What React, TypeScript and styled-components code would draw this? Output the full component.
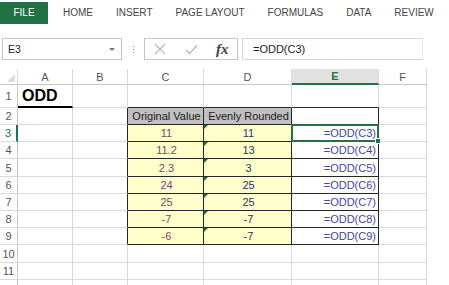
import { Fragment } from 'react';

import styled, { createGlobalStyle } from 'styled-components';

const GRID = '#d9d9d9';
const DARK = '#262626';
const GREEN = '#217346';

const GlobalStyle = createGlobalStyle`
  html, body {
    margin: 0;
    padding: 0;
    background: #fff;
  }
  body {
    font-family: 'Liberation Sans', Arial, sans-serif;
    width: 449px;
    height: 285px;
    overflow: hidden;
  }
`;

const tabs = ['HOME', 'INSERT', 'PAGE LAYOUT', 'FORMULAS', 'DATA', 'REVIEW'];
const columns = [
  { key: 'A', width: 55 },
  { key: 'B', width: 55 },
  { key: 'C', width: 76 },
  { key: 'D', width: 88 },
  { key: 'E', width: 87 },
  { key: 'F', width: 48 },
];
// last row only peeks in at the bottom edge, its number is below the fold
const rowHeights = [23, 17, 17, 17, 18, 17, 17, 17, 17, 18, 17, 17];
const visibleRows = 11;

const values = [
  { orig: '11', rounded: '11' },
  { orig: '11.2', rounded: '13' },
  { orig: '2.3', rounded: '3' },
  { orig: '24', rounded: '25' },
  { orig: '25', rounded: '25' },
  { orig: '-7', rounded: '-7' },
  { orig: '-6', rounded: '-7' },
];

type CellSpec = {
  text?: string;
  bg?: string;
  color?: string;
  align?: 'left' | 'center' | 'right';
  right?: string;
  bottom?: string;
  bottomWidth?: number;
  title?: boolean;
  flag?: boolean;
  selected?: boolean;
};

// works out what sits in each cell of the sheet
const cellAt = (row: number, col: string): CellSpec => {
  const inTable = row >= 2 && row <= 9;
  if (row === 1 && col === 'A') return { text: 'ODD', title: true, bottom: '#000', bottomWidth: 2 };
  if (row === 1 && ['C', 'D', 'E'].includes(col)) return { bottom: DARK };
  if (!inTable) return {};
  if (col === 'B') return { right: DARK };
  if (row === 2) {
    if (col === 'C') return { text: 'Original Value', bg: '#c0c0c0', color: '#1a1a1a', right: DARK, bottom: DARK };
    if (col === 'D') return { text: 'Evenly Rounded', bg: '#c0c0c0', color: '#1a1a1a', right: DARK, bottom: DARK };
    if (col === 'E') return { right: DARK, bottom: DARK };
    return {};
  }
  const v = values[row - 3];
  if (col === 'C') return { text: v.orig, bg: '#ffffcc', color: '#7a4468', right: DARK, bottom: DARK };
  if (col === 'D') return { text: v.rounded, bg: '#ffffcc', color: '#253865', right: DARK, bottom: DARK, flag: true };
  if (col === 'E')
    return {
      text: `=ODD(C${row})`,
      color: '#4444a6',
      align: 'right',
      right: DARK,
      bottom: DARK,
      selected: row === 3,
    };
  return {};
};

const App = () => {
  return (
    <Page>
      <GlobalStyle />
      <Ribbon>
        <FileTab>FILE</FileTab>
        <Tabs>
          {tabs.map((t) => (
            <Tab key={t}>{t}</Tab>
          ))}
        </Tabs>
      </Ribbon>

      <FormulaBar>
        <NameBox>
          <span>E3</span>
          <Caret />
        </NameBox>
        <Dots>
          <i />
          <i />
          <i />
        </Dots>
        <FxBox>
          <svg width="12" height="12" viewBox="0 0 12 12">
            <path d="M1 1 L11 11 M11 1 L1 11" stroke="#bdbdbd" strokeWidth="1.4" fill="none" />
          </svg>
          <svg width="13" height="11" viewBox="0 0 13 11">
            <path d="M1 6 L4.5 9.5 L12 1.5" stroke="#bdbdbd" strokeWidth="1.5" fill="none" />
          </svg>
          <Fx>fx</Fx>
        </FxBox>
        <FormulaInput>=ODD(C3)</FormulaInput>
      </FormulaBar>

      <Sheet $rows={rowHeights}>
        <Corner />
        {columns.map((c) => (
          <ColHead key={c.key} $selected={c.key === 'E'}>
            {c.key}
          </ColHead>
        ))}
        {rowHeights.map((_, i) => {
          const row = i + 1;
          return (
            <Fragment key={row}>
              <RowHead $selected={row === 3}>{row <= visibleRows ? row : ''}</RowHead>
              {columns.map((c) => {
                const s = cellAt(row, c.key);
                return (
                  <Cell
                    key={c.key}
                    $bg={s.bg}
                    $color={s.color}
                    $align={s.align ?? (s.title ? 'left' : 'center')}
                    $right={s.right}
                    $bottom={s.bottom}
                    $bottomWidth={s.bottomWidth}
                    $title={s.title}
                    $flag={s.flag}
                  >
                    {s.text}
                    {s.selected && (
                      <Selection>
                        <Handle />
                      </Selection>
                    )}
                  </Cell>
                );
              })}
            </Fragment>
          );
        })}
      </Sheet>
    </Page>
  );
};

export default App;

const Page = styled.div`
  width: 449px;
  height: 285px;
  overflow: hidden;
  background: #fff;
`;

const Ribbon = styled.div`
  display: flex;
  align-items: center;
  height: 24px;
  padding-top: 1px;
  box-sizing: border-box;
`;

const FileTab = styled.div`
  width: 48px;
  height: 22px;
  background: ${GREEN};
  color: #fff;
  font-size: 10px;
  display: flex;
  align-items: center;
  justify-content: center;
`;

const Tabs = styled.div`
  display: flex;
  gap: 23px;
  margin-left: 15px;
  white-space: nowrap;
`;

const Tab = styled.div`
  font-size: 10px;
  color: #444;
`;

const FormulaBar = styled.div`
  display: flex;
  align-items: center;
  height: 22px;
  margin-top: 14px;
  padding-left: 2px;
`;

const NameBox = styled.div`
  width: 120px;
  height: 22px;
  box-sizing: border-box;
  border: 1px solid #c6c6c6;
  display: flex;
  align-items: center;
  justify-content: space-between;
  padding: 0 6px 0 5px;
  font-size: 10.5px;
  color: #222;
`;

const Caret = styled.span`
  width: 0;
  height: 0;
  border-left: 3px solid transparent;
  border-right: 3px solid transparent;
  border-top: 3px solid #777;
`;

const Dots = styled.div`
  display: flex;
  flex-direction: column;
  gap: 2px;
  margin: 0 10px 0 11px;
  i {
    display: block;
    width: 1px;
    height: 1px;
    background: #999;
  }
`;

const FxBox = styled.div`
  width: 94px;
  height: 22px;
  box-sizing: border-box;
  border: 1px solid #c6c6c6;
  display: flex;
  align-items: center;
  gap: 19px;
  padding-left: 9px;
`;

const Fx = styled.span`
  font-family: 'Liberation Serif', 'Times New Roman', serif;
  font-style: italic;
  font-weight: bold;
  font-size: 15px;
  color: #444;
  margin-left: -1px;
`;

const FormulaInput = styled.div`
  width: 181px;
  height: 22px;
  box-sizing: border-box;
  margin-left: 4px;
  border: 1px solid #d6d6d6;
  border-right-color: #ececec;
  display: flex;
  align-items: center;
  padding-left: 10px;
  font-size: 11px;
  color: #222;
`;

const Sheet = styled.div<{ $rows: number[] }>`
  display: grid;
  grid-template-columns: 18px ${columns.map((c) => `${c.width}px`).join(' ')};
  grid-template-rows: 16px ${(p) => p.$rows.map((h) => `${h}px`).join(' ')};
  margin-top: 9px;
  font-size: 11px;
`;

const Corner = styled.div`
  position: relative;
  border-right: 1px solid ${GRID};
  border-bottom: 1px solid #c6c6c6;
  &::after {
    content: '';
    position: absolute;
    right: 2px;
    bottom: 2px;
    border-left: 8px solid transparent;
    border-bottom: 8px solid #dcdcdc;
  }
`;

const ColHead = styled.div<{ $selected?: boolean }>`
  display: flex;
  align-items: center;
  justify-content: center;
  background: ${(p) => (p.$selected ? '#e1e1e1' : '#fff')};
  color: ${(p) => (p.$selected ? GREEN : '#555')};
  font-weight: ${(p) => (p.$selected ? 'bold' : 'normal')};
  border-right: 1px solid ${GRID};
  border-bottom: ${(p) => (p.$selected ? `2px solid ${GREEN}` : '1px solid #c6c6c6')};
  font-size: 11px;
`;

const RowHead = styled.div<{ $selected?: boolean }>`
  display: flex;
  align-items: center;
  justify-content: center;
  color: ${(p) => (p.$selected ? GREEN : '#555')};
  border-right: ${(p) => (p.$selected ? `2px solid ${GREEN}` : `1px solid #c6c6c6`)};
  border-bottom: 1px solid ${GRID};
  font-size: 11px;
`;

const Cell = styled.div<{
  $bg?: string;
  $color?: string;
  $align: 'left' | 'center' | 'right';
  $right?: string;
  $bottom?: string;
  $bottomWidth?: number;
  $title?: boolean;
  $flag?: boolean;
}>`
  position: relative;
  display: flex;
  align-items: center;
  justify-content: ${(p) => (p.$align === 'left' ? 'flex-start' : p.$align === 'right' ? 'flex-end' : 'center')};
  padding: 0 2px 0 4px;
  white-space: nowrap;
  background: ${(p) => p.$bg ?? '#fff'};
  color: ${(p) => p.$color ?? '#000'};
  border-right: 1px solid ${(p) => p.$right ?? GRID};
  border-bottom: ${(p) => p.$bottomWidth ?? 1}px solid ${(p) => p.$bottom ?? GRID};
  font-size: ${(p) => (p.$title ? '16px' : '11px')};
  font-weight: ${(p) => (p.$title ? 'bold' : 'normal')};
  &::before {
    content: '';
    display: ${(p) => (p.$flag ? 'block' : 'none')};
    position: absolute;
    top: 0;
    left: 0;
    border-top: 4px solid #1e7145;
    border-right: 4px solid transparent;
  }
`;

const Selection = styled.span`
  position: absolute;
  top: -1px;
  left: -1px;
  right: -1px;
  bottom: -1px;
  border: 2px solid ${GREEN};
  z-index: 2;
  pointer-events: none;
`;

const Handle = styled.span`
  position: absolute;
  right: -4px;
  bottom: -4px;
  width: 4px;
  height: 4px;
  background: ${GREEN};
  border: 1px solid #fff;
`;
